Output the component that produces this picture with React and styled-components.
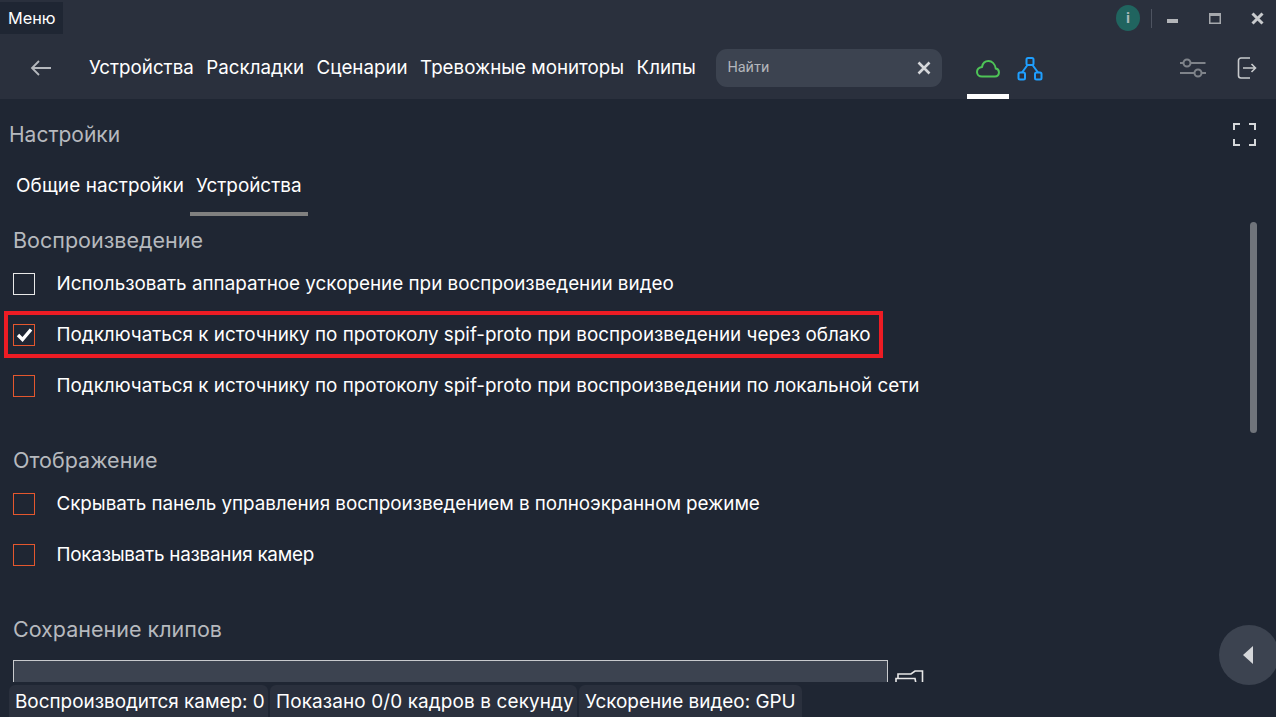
import React from "react";
import styled, { createGlobalStyle } from "styled-components";

const Global = createGlobalStyle`
  html, body { margin: 0; padding: 0; height: 100%; overflow: hidden; background: #1f2633; }
  #root { height: 100%; }
  * { box-sizing: border-box; }
`;
const Page = styled.div`
  position: relative; width: 1276px; height: 717px; overflow: hidden;
  display: flex; flex-direction: column; background: #1f2633;
  font-family: Inter, "Liberation Sans", sans-serif; color: #fff;
`;
const Header = styled.header`
  height: 99px; flex: none; background: #2a303d; display: flex; flex-direction: column;
`;
const TitleBar = styled.div`
  height: 33px; display: flex; align-items: flex-start; justify-content: space-between; padding-top: 2px;
`;
const MenuButton = styled.div`
  width: 63px; height: 32px; background: #1f2633; font-size: 16.3px; display: flex; align-items: center; padding-left: 8px; color: #fff;
`;
const WindowControls = styled.div`
  display: flex; align-items: center; height: 30px; margin-top: 1px; padding-right: 5px;
`;
const InfoDot = styled.div`
  width: 24px; height: 26px; border-radius: 50%; background: #20645f; color: #a9b8b8;
  font: 700 15px "Roboto", sans-serif; display: flex; align-items: center; justify-content: center;
`;
const VSep = styled.div`
  width: 1px; height: 19px; background: #4e5461; margin: 0 5px 0 11px;
`;
const WinBtn = styled.div`
  width: ${p => p.$w || 39}px; display: flex; justify-content: center; align-items: center;
`;
const NavRow = styled.div`
  flex: 1; display: flex; align-items: center; position: relative;
`;
const BackBtn = styled.div`
  width: 89px; padding-left: 30px; display: flex; align-items: center; padding-top: 4px;
`;
const NavLinks = styled.nav`
  display: flex; gap: 12.5px; font-size: 18.75px; margin-top: 3px; color: #fff;
`;
const Search = styled.div`
  margin-left: 20.5px; margin-top: 3px; width: 226px; height: 38px; border-radius: 11px; background: #3c4350;
  display: flex; align-items: center; justify-content: space-between; padding: 0 11px;
  font: 14.5px Roboto, sans-serif; color: #b3b6bb;
`;
const ModeTabs = styled.div`
  margin-left: 25px; align-self: stretch; display: flex; align-items: center; position: relative; width: 86px;
`;
const ModeTab = styled.div`
  width: 42px; height: 100%; display: flex; align-items: center; justify-content: center; padding-top: 11px;
  border-bottom: 5px solid ${p => (p.$active ? "#fff" : "transparent")};
`;
const RightIcons = styled.div`
  margin-left: auto; display: flex; align-items: center; gap: 31px; padding-right: 19px; margin-top: 3px;
`;
const Content = styled.main`
  flex: 1; position: relative; overflow: hidden; padding-left: 13px;
`;
const TitleRow = styled.div`
  height: 70px; margin-left: -4px; padding-right: 20px; display: flex; align-items: center; justify-content: space-between; font-size: 21px; color: #b6b9be;
`;
const Tabs = styled.div`
  display: flex; margin-left: -6px; height: 47px;
`;
const Tab = styled.div`
  padding-top: 5px; font-size: 18.9px; height: 47px; color: #fff;
  ${p => p.$active
    ? "border-bottom: 4px solid #808080; width: 118px; padding-left: 6px;"
    : "width: 183px; padding-left: 9px; letter-spacing: 0.13px;"}
`;
const Section = styled.section`
  margin-top: ${p => p.$mt || 0}px;
  margin-bottom: ${p => p.$mb || 0}px;
`;
const SectionTitle = styled.h2`
  margin: 0 0 6px; height: 24px; line-height: 24px; font-size: 21.5px; font-weight: 400; color: #b6b9be;
`;
const Row = styled.div`
  display: flex; align-items: center; height: 51px; position: relative; font-size: 18.85px; color: #fff; white-space: nowrap;
  letter-spacing: ${p => p.$tracking || 0}px;
`;
const Box = styled.div`
  width: 22px; height: 22px; flex: none; margin-right: 21.5px; border: 1px solid ${p => p.$color}; display: flex; align-items: center; justify-content: center;
`;
const Highlight = styled.div`
  position: absolute; left: -9px; top: 2px; width: 879px; height: 47px; border: 4px solid #ed1c24; pointer-events: none;
`;
const PathRow = styled.div`
  display: flex; align-items: flex-start; gap: 7px; margin-top: 19px;
`;
const PathInput = styled.div`
  width: 875px; height: 40px; background: #3c4350; border: 1px solid #c8cacd;
`;
const FolderIcon = styled.svg`
  margin-top: 10px; flex: none;
`;
const Scrollbar = styled.div`
  position: absolute; left: 1250px; top: 123px; width: 7px; height: 211px; border-radius: 4px; background: #70747b;
`;
const FloatButton = styled.div`
  position: absolute; left: 1219px; top: 526px; width: 60px; height: 60px; border-radius: 50%; background: #3c4350;
  display: flex; align-items: center; padding-left: 24px; z-index: 3;
`;
const StatusBar = styled.footer`
  position: absolute; left: 9px; bottom: 0; display: flex; gap: 2px; z-index: 2;
`;
const Pill = styled.div`
  height: 32px; background: #2a303d; border-radius: 6px 6px 0 0; padding: 0 4px 0 6px; display: flex; align-items: center;
  font-size: 18.9px; color: #fff; white-space: nowrap; width: ${p => p.$w}px; letter-spacing: ${p => p.$tracking || 0}px;
`;
const BottomMask = styled.div`
  position: absolute; left: 0; right: 0; bottom: 0; height: 35px; background: #1f2633; z-index: 1;
`;

const Check = () => (
  <svg width="17" height="15" viewBox="0 0 17 15"><path d="M2 8 6.5 12.5 15 2.5" fill="none" stroke="#fff" strokeWidth="3.4" /></svg>
);

const CheckRow = ({ color, checked, highlight, tracking, children }) => (
  <Row $tracking={tracking}>
    <Box $color={color}>{checked && <Check />}</Box>
    {children}
    {highlight && <Highlight />}
  </Row>
);

export default function App() {
  return (
    <Page>
      <Global />
      <Header>
        <TitleBar>
          <MenuButton>Меню</MenuButton>
          <WindowControls>
            <InfoDot>i</InfoDot>
            <VSep />
            <WinBtn $w={30}><svg width="11" height="12" viewBox="0 0 11 12"><rect y="7" width="11" height="4" fill="#b3b5b9" /></svg></WinBtn>
            <WinBtn $w={56}><svg width="12" height="11" viewBox="0 0 12 11"><rect x=".75" y=".75" width="10.5" height="9.5" fill="none" stroke="#a5a8ad" strokeWidth="1.5" /><rect width="12" height="3" fill="#a5a8ad" /></svg></WinBtn>
            <WinBtn $w={28}><svg width="13" height="13" viewBox="0 0 13 13"><path d="M1.5 1.5 11.5 11.5M11.5 1.5 1.5 11.5" stroke="#c8cacd" strokeWidth="3" /></svg></WinBtn>
          </WindowControls>
        </TitleBar>
        <NavRow>
          <BackBtn>
            <svg width="22" height="16" viewBox="0 0 22 16"><path d="M21 8H2M9 1 2 8l7 7" fill="none" stroke="#b5b8bd" strokeWidth="1.8" /></svg>
          </BackBtn>
          <NavLinks>
            <span>Устройства</span><span>Раскладки</span><span>Сценарии</span><span>Тревожные мониторы</span><span>Клипы</span>
          </NavLinks>
          <Search>
            Найти
            <svg width="14" height="14" viewBox="0 0 14 14"><path d="M1.5 1.5 12.5 12.5M12.5 1.5 1.5 12.5" stroke="#d5d7da" strokeWidth="2.6" /></svg>
          </Search>
          <ModeTabs>
            <ModeTab $active>
              <svg width="24" height="18" viewBox="0 0 24 18"><path d="M6 16.5h13a4 4 0 0 0 .8-7.9C19 4 16 1 12.5 1 9 1 6.6 3.5 6 7 3 7.5 1 9.5 1 12s2 4.5 5 4.5Z" fill="none" stroke="#4ec457" strokeWidth="2" /></svg>
            </ModeTab>
            <ModeTab>
              <svg width="26" height="24" viewBox="0 0 26 24" fill="none" stroke="#1f9fff" strokeWidth="2"><rect x="9.5" y="1" width="7" height="7" rx="1.5" /><rect x="1.5" y="15.5" width="6.5" height="7" rx="1.5" /><rect x="18" y="15.5" width="6.5" height="7" rx="1.5" /><path d="M10.5 8 5 15.5M15.5 8 21 15.5" /></svg>
            </ModeTab>
          </ModeTabs>
          <RightIcons>
            <svg width="26" height="20" viewBox="0 0 26 20" fill="none" stroke="#7f838a" strokeWidth="2"><path d="M0 5h3.5M10.5 5h15M0 15h14.5M21.5 15h4.5" /><circle cx="7" cy="5" r="3.5" /><circle cx="18" cy="15" r="3.5" /></svg>
            <svg width="20" height="24" viewBox="0 0 20 24" fill="none" stroke="#c8cacd" strokeWidth="1.6"><path d="M13 2H4a2.5 2.5 0 0 0-2.5 2.5v15A2.5 2.5 0 0 0 4 22h9M6 12h12.5M14.5 8l4 4-4 4" /></svg>
          </RightIcons>
        </NavRow>
      </Header>
      <Content>
        <TitleRow>
          Настройки
          <svg width="23" height="23" viewBox="0 0 23 23" fill="none" stroke="#d5d7da" strokeWidth="2"><path d="M1 7V1h6M16 1h6v6M1 16v6h6M22 16v6h-6" /></svg>
        </TitleRow>
        <Tabs>
          <Tab>Общие настройки</Tab>
          <Tab $active>Устройства</Tab>
        </Tabs>
        <Section $mt={12} $mb={37}>
          <SectionTitle>Воспроизведение</SectionTitle>
          <CheckRow color="#e8e8e8">Использовать аппаратное ускорение при воспроизведении видео</CheckRow>
          <CheckRow color="#e4572e" checked highlight>Подключаться к источнику по протоколу spif-proto при воспроизведении через облако</CheckRow>
          <CheckRow color="#e4572e">Подключаться к источнику по протоколу spif-proto при воспроизведении по локальной сети</CheckRow>
        </Section>
        <Section $mb={37}>
          <SectionTitle>Отображение</SectionTitle>
          <CheckRow color="#e4572e" tracking={-0.06}>Скрывать панель управления воспроизведением в полноэкранном режиме</CheckRow>
          <CheckRow color="#e4572e" tracking={-0.24}>Показывать названия камер</CheckRow>
        </Section>
        <Section>
          <SectionTitle>Сохранение клипов</SectionTitle>
          <PathRow>
            <PathInput />
            <FolderIcon width="29" height="24" viewBox="0 0 29 24" fill="none" stroke="#e8e8e8" strokeWidth="1.6"><path d="M3 8.5V4H16L20 1H27.5V24M1 24V8.5H20L23 24" /></FolderIcon>
          </PathRow>
        </Section>
        <Scrollbar />
        <FloatButton>
          <svg width="11" height="18" viewBox="0 0 11 18"><path d="M10 0V18L0 9Z" fill="#d5d7da" /></svg>
        </FloatButton>
      </Content>
      <BottomMask />
      <StatusBar>
        <Pill $w={259}>Воспроизводится камер: 0</Pill>
        <Pill $w={307} $tracking={0.14}>Показано 0/0 кадров в секунду</Pill>
        <Pill $w={223}>Ускорение видео: GPU</Pill>
      </StatusBar>
    </Page>
  );
}
